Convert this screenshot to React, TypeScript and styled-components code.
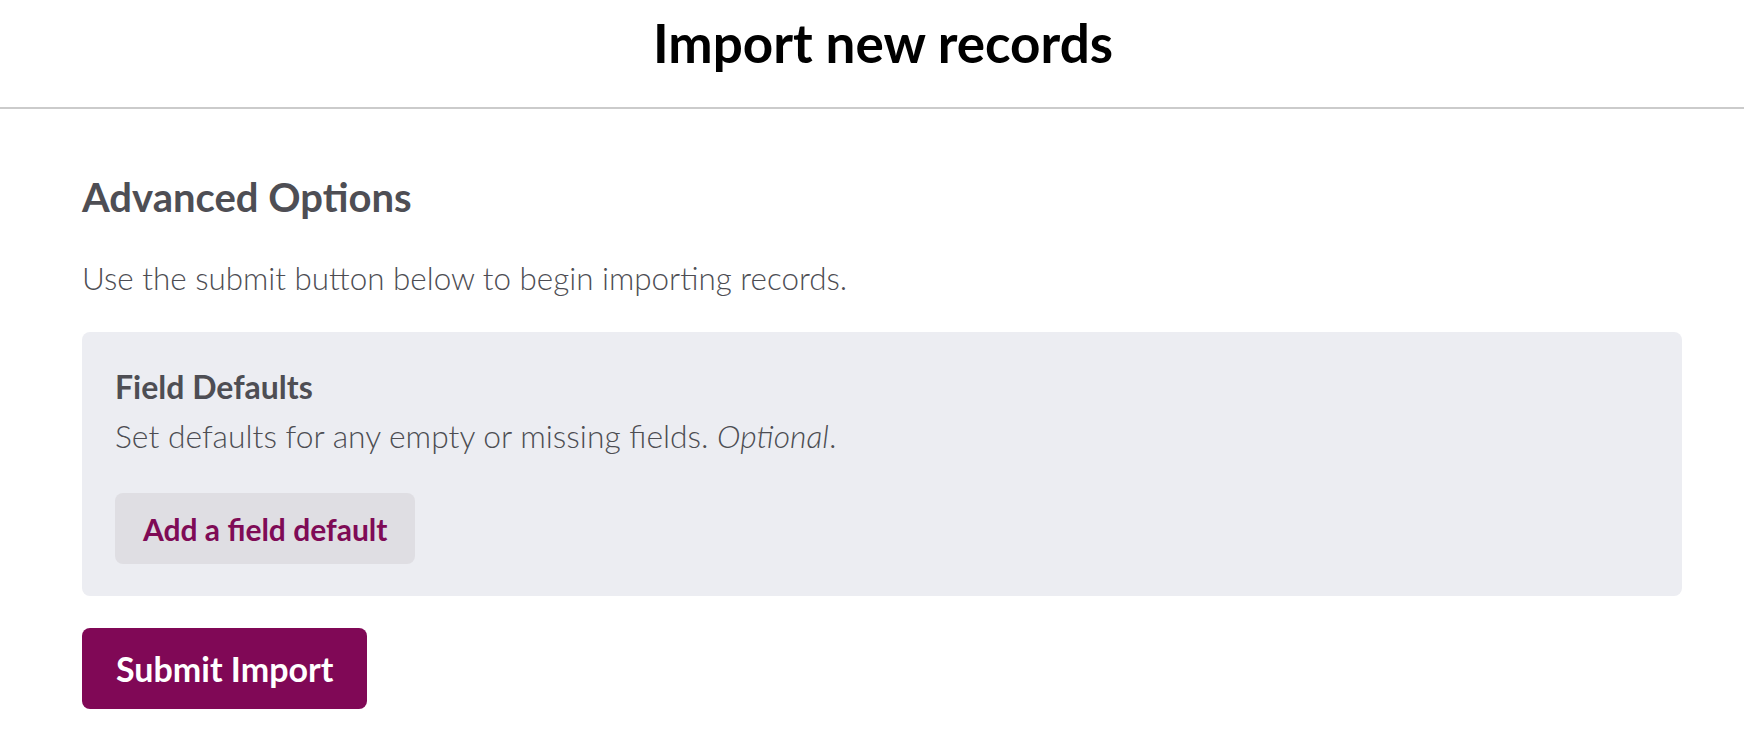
import React from 'react';
import styled, { createGlobalStyle } from 'styled-components';

const GlobalStyle = createGlobalStyle`
  html, body {
    margin: 0;
    padding: 0;
    background: #ffffff;
  }
  body {
    font-family: Lato, 'Open Sans', 'Liberation Sans', sans-serif;
    color: #4d4d53;
  }
`;

const Header = styled.header`
  padding: 11px 0 32px 22px;
  border-bottom: 2px solid #cbcbcb;
  text-align: center;
`;

const Title = styled.h1`
  margin: 0;
  font-size: 53px;
  line-height: 64px;
  font-weight: 700;
  color: #000000;
`;

const Main = styled.main`
  padding: 63px 62px 40px 82px;
`;

const SectionTitle = styled.h2`
  margin: 0;
  font-size: 40px;
  line-height: 50px;
  font-weight: 700;
  color: #4e4e54;
`;

const Lead = styled.p`
  margin: 36px 0 0;
  font-size: 31.4px;
  line-height: 40px;
  font-weight: 300;
  color: #4d4d53;
`;

const Panel = styled.section`
  margin-top: 34px;
  padding: 35px 33px 32px;
  background: #ecedf2;
  border-radius: 8px;
`;

const PanelTitle = styled.h3`
  margin: 0;
  font-size: 32px;
  line-height: 40px;
  font-weight: 700;
  color: #4e4e54;
`;

const PanelText = styled.p`
  margin: 9px 0 0;
  font-size: 31.8px;
  line-height: 40px;
  font-weight: 300;
  color: #4d4d53;

  em {
    font-style: italic;
  }
`;

const Button = styled.button<{ $primary?: boolean }>`
  display: inline-flex;
  align-items: center;
  justify-content: center;
  box-sizing: border-box;
  border: none;
  border-radius: 8px;
  font-family: inherit;
  font-weight: 700;
  cursor: pointer;
  background: ${(p) => (p.$primary ? '#800856' : '#dfdee3')};
  color: ${(p) => (p.$primary ? '#ffffff' : '#7f0b56')};
  font-size: ${(p) => (p.$primary ? '34px' : '30px')};
  height: ${(p) => (p.$primary ? '81px' : '71px')};
  padding: 0 ${(p) => (p.$primary ? '34px' : '28px')};
`;

const AddRow = styled.div`
  margin-top: 37px;
`;

const SubmitRow = styled.div`
  margin-top: 32px;
`;

export default function App() {
  return (
    <>
      <GlobalStyle />
      <Header>
        <Title>Import new records</Title>
      </Header>
      <Main>
        <SectionTitle>Advanced Options</SectionTitle>
        <Lead>Use the submit button below to begin importing records.</Lead>
        <Panel>
          <PanelTitle>Field Defaults</PanelTitle>
          <PanelText>
            Set defaults for any empty or missing fields. <em>Optional</em>.
          </PanelText>
          <AddRow>
            <Button type="button">Add a field default</Button>
          </AddRow>
        </Panel>
        <SubmitRow>
          <Button $primary type="submit">Submit Import</Button>
        </SubmitRow>
      </Main>
    </>
  );
}
